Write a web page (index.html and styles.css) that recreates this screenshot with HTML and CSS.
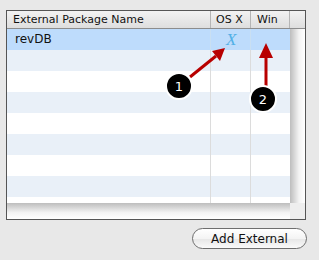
FILE: index.html
```html
<!DOCTYPE html>
<html lang="en">
<head>
    <meta charset="UTF-8">
    <title>External Packages</title>
    <link rel="stylesheet" href="styles.css">
</head>
<body>
    <div class="panel">
        <div class="head">
            <div class="col-name">External Package Name</div>
            <div class="col-osx">OS X</div>
            <div class="col-win">Win</div>
            <div class="col-gap"></div>
        </div>
        <div class="middle">
            <div class="rows">
                <div class="row selected">
                    <div class="col-name">revDB</div>
                    <div class="col-osx"><span class="osx-mark">X</span></div>
                    <div class="col-win"></div>
                </div>
                <div class="row alt"><div class="col-name"></div><div class="col-osx"></div><div class="col-win"></div></div>
                <div class="row"><div class="col-name"></div><div class="col-osx"></div><div class="col-win"></div></div>
                <div class="row alt"><div class="col-name"></div><div class="col-osx"></div><div class="col-win"></div></div>
                <div class="row"><div class="col-name"></div><div class="col-osx"></div><div class="col-win"></div></div>
                <div class="row alt"><div class="col-name"></div><div class="col-osx"></div><div class="col-win"></div></div>
                <div class="row"><div class="col-name"></div><div class="col-osx"></div><div class="col-win"></div></div>
                <div class="row alt"><div class="col-name"></div><div class="col-osx"></div><div class="col-win"></div></div>
                <div class="row short"><div class="col-name"></div><div class="col-osx"></div><div class="col-win"></div></div>
            </div>
            <div class="vgutter"></div>
        </div>
        <div class="bottom">
            <div class="hgutter"></div>
            <div class="corner"></div>
        </div>
    </div>

    <div class="actions">
        <button class="add-btn">Add External</button>
    </div>

    <!-- callouts drawn over the table -->
    <svg class="callouts" width="319" height="260" viewBox="0 0 319 260">
        <line x1="190" y1="77" x2="216" y2="56" stroke="#b80000" stroke-width="3"/>
        <polygon points="225,48 212,51 220,61" fill="#b80000"/>
        <line x1="266" y1="86" x2="266" y2="58" stroke="#b80000" stroke-width="3"/>
        <polygon points="266,43 259,58 273,58" fill="#b80000"/>
        <circle cx="179" cy="86" r="13" fill="#000" stroke="#fff" stroke-width="2"/>
        <circle cx="263" cy="99" r="13" fill="#000" stroke="#fff" stroke-width="2"/>
        <text x="179" y="91" class="callout-num">1</text>
        <text x="263" y="104" class="callout-num">2</text>
    </svg>
</body>
</html>
```

FILE: styles.css
```css
body {
    margin: 0;
    padding: 10px 0 0 6px;
    width: 319px;
    height: 260px;
    box-sizing: border-box;
    background-color: #e8e8e8;
    font-family: "DejaVu Sans", sans-serif;
    font-size: 11px;
    color: #111;
    position: relative;
    overflow: hidden;
}

.panel {
    width: 300px;
    height: 210px;
    box-sizing: border-box;
    border: 1px solid #555;
    background-color: #fff;
    display: flex;
    flex-direction: column;
}

.head {
    display: flex;
    height: 18px;
    box-sizing: border-box;
    border-bottom: 1px solid #8c8c8c;
    background: linear-gradient(#f2f2f2, #dedede);
}

.head > div {
    box-sizing: border-box;
    line-height: 17px;
    border-right: 1px solid #b5b5b5;
}

.head .col-gap {
    width: 15px;
    border-right: none;
}

.col-name {
    width: 204px;
    padding-left: 6px;
}

.col-osx {
    width: 40px;
    padding-left: 5px;
}

.col-win {
    width: 39px;
    padding-left: 6px;
}

.middle {
    display: flex;
    height: 174px;
}

.rows {
    width: 283px;
}

.row {
    display: flex;
    height: 21px;
}

.row > div {
    box-sizing: border-box;
    line-height: 21px;
    border-right: 1px solid #dcdcdc;
}

.row > .col-win {
    border-right: none;
}

.row > .col-name {
    padding-left: 8px;
    font-size: 12px;
}

.row.alt {
    background-color: #e9f0f8;
}

.row.selected {
    background-color: #bedcfc;
}

.row.selected > div {
    border-right-color: #c9dff2;
}

.row.short {
    height: 6px;
}

.osx-mark {
    display: inline-block;
    margin-left: 10px;
    font-family: "Liberation Serif", serif;
    font-style: italic;
    font-size: 17px;
    color: #52b0e6;
}

.vgutter {
    width: 15px;
    background: linear-gradient(to right, #bdbdbd, #f3f3f3 60%, #ffffff);
}

.bottom {
    display: flex;
    height: 16px;
}

.hgutter {
    width: 283px;
    background: linear-gradient(#bdbdbd, #f3f3f3 60%, #ffffff);
}

.corner {
    width: 15px;
    background-color: #eeeeee;
}

.actions {
    display: flex;
    justify-content: flex-end;
    width: 301px;
    margin-top: 8px;
}

.add-btn {
    width: 115px;
    height: 21px;
    border: 1px solid #6e6e6e;
    border-radius: 11px;
    background: linear-gradient(#ffffff, #f4f4f4 50%, #e6e6e6 51%, #fafafa);
    font-family: "DejaVu Sans", sans-serif;
    font-size: 12px;
    color: #111;
    padding: 0;
}

.callouts {
    position: absolute;
    left: 0;
    top: 0;
}

.callout-num {
    fill: #fff;
    font-family: "DejaVu Sans", sans-serif;
    font-size: 13px;
    text-anchor: middle;
}
```
